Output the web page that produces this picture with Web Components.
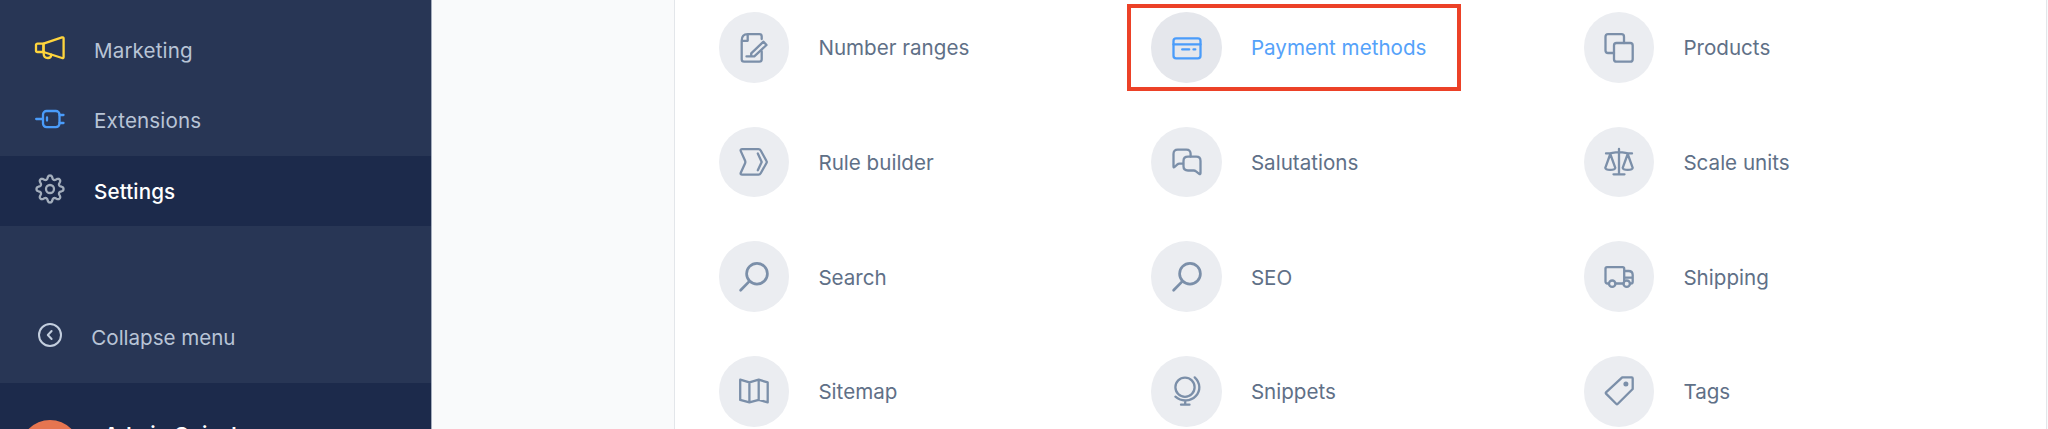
<!DOCTYPE html>
<html lang="en">
<head>
<meta charset="utf-8">
<title>Settings</title>
<style>
html,body{margin:0;height:100%;overflow:hidden;background:#f9fafb}
body{font-family:Inter,"Liberation Sans",sans-serif}
</style>
</head>
<body>
<admin-app></admin-app>
<script>
const gear = (() => {
  const pts = [];
  for (let i = 0; i < 160; i++) {
    const a = i / 160 * Math.PI * 2;
    const r = 11.7 + 1.8 * Math.tanh(1.3 * Math.cos(8 * a)) / Math.tanh(1.3);
    pts.push((15 + r * Math.cos(a)).toFixed(2) + ' ' + (15 + r * Math.sin(a)).toFixed(2));
  }
  return 'M' + pts.join('L') + 'Z';
})();

const ICONS = {
  marketing: '<path d="M8.5 10.7 27 4.4q1.6-.5 1.6 1V24q0 1.500-1.600 1L8.500 19Z"/><path d="M8.500 10.700H2.500Q1 10.700 1 12v5.700Q1 19 2.500 19h6ZM8.500 10.700V19"/><path d="M8.700 19v2q0 4 4.300 4 3.200 0 3.200-3.300"/>',
  plug: '<rect x="8" y="7" width="16.500" height="16.200" rx="3.600"/><path d="M1.200 15H8M24.500 11h4M24.500 19h4M12 13.500v3"/>',
  gear: '<path d="' + gear + '"/><circle cx="15" cy="15" r="4"/>',
  collapse: '<g stroke-width="2"><circle cx="15" cy="15" r="11"/><path d="m16.600 11-3.800 4 3.800 4"/></g>',
  numbers: '<path d="M22.700 6V3.500Q22.700 1.200 20.400 1.200H8.700Q2.700 1.200 2.700 7.800v18.400q0 2.400 2.400 2.400h15.200q2.400 0 2.400-2.400V18.500M2.700 7.800h6V1.200"/><path d="M7.500 23.400h7.800L27.500 12l-3-3.300L12.200 20.300v3"/>',
  rule: '<path d="M3.300 2.200H19.500q1.500 0 2.200 1.300L27.500 14q.6 1 0 2L21.700 26.300q-.7 1.300-2.200 1.300H3.300q-2.400 0-1.400-2.200L6 16.500q.7-1.500 0-3L1.900 4.400q-1-2.200 1.400-2.200Z"/><path d="M18.800 6.500 22.700 15l-3.900 8.300"/>',
  search: '<g stroke-width="2.700"><circle cx="18" cy="11.700" r="10.400"/><path d="m10.300 19.400-8.700 8.900"/></g>',
  map: '<path d="m1.200 3.700 9.200 2.700 9.300-2.700 9 2.700v20l-9-2.500-9.300 2.500-9.200-2.500ZM10.400 6.400v20M19.700 3.700v20.200"/>',
  card: '<rect x="1.500" y="5.300" width="27" height="20" rx="2.600"/><path d="M1.500 11.400h27M10.200 16.400h7M21.500 16.400h1.800"/>',
  chat: '<path d="M18.600 9.500V6.800q0-4.100-4.200-4.100H5.700Q1.500 2.700 1.500 6.900V19.500q0 1.500 1.100.5l2.500-2.300q1.100-1 2.400-1H11"/><path d="M16 9.700h8.300q4.200 0 4.200 4.200V26q0 1.800-1.300.8L24 24.300q-1-.8-2.300-.8H16q-4.500 0-4.500-4.200v-5.400q0-4.200 4.500-4.200Z"/>',
  globe: '<circle cx="13" cy="11.200" r="9.600"/><path d="M22.700 1.400c6 5.700 6 13.600 1 18.700S10 26.400 3.400 20.700M13.200 24.500v4.200M9 28.700h8.500"/>',
  products: '<path d="M10 20H4q-2.500 0-2.500-2.500V3.700Q1.500 1.200 4 1.200h13.500Q20 1.200 20 3.700V10"/><rect x="10" y="10" width="18.700" height="18.700" rx="2.500"/>',
  scale: '<path d="M15 2v25M9.500 27.300h11M2 6.400q3.500.2 6.500-.6 6.500-1.400 13 0 3 .8 6.500.6"/><path d="M6.300 7 1.300 20.800q.3 2 5 2t5-2ZM23.700 7l-5 13.800q.3 2 5 2t5-2Z"/>',
  truck: '<path d="M4.800 21.500H3.500Q1.500 21.500 1.500 19.500V6.700Q1.500 5.200 3 5.200H18.700Q20.200 5.200 20.200 6.700V19M11.500 21.500h8M26 21.500h1q1.700 0 1.700-1.700V13q0-4-4.200-4h-4.300M20.200 15.700h8.500"/><circle cx="8.200" cy="21.700" r="3.200"/><circle cx="22.700" cy="21.700" r="3.200"/>',
  tag: '<path d="M18.200 1.400H27.700q1 0 1 1V13L13.600 28q-.6.600-1.200 0L2 17.600q-.6-.6 0-1.200Z"/><circle cx="21.900" cy="8" r="2.500" fill="currentColor" stroke="none"/>'
};

class UiIcon extends HTMLElement {
  constructor() {
    super();
    this.attachShadow({mode: 'open'}).innerHTML = `
      <style>:host{display:block;width:30px;height:30px;flex:none}svg{display:block;overflow:visible}</style>
      <svg width="30" height="30" viewBox="0 0 30 30" fill="none" stroke="currentColor" stroke-width="2.300" stroke-linecap="round" stroke-linejoin="round">${ICONS[this.getAttribute('name')]}</svg>`;
  }
}
customElements.define('ui-icon', UiIcon);

class NavItem extends HTMLElement {
  constructor() {
    super();
    this.attachShadow({mode: 'open'}).innerHTML = `
      <style>
        :host{display:flex;align-items:center;box-sizing:border-box;height:70.500px;padding:0 0 var(--lift,2.800px) 35px;gap:var(--gap,29px);color:#b8c4d6;font-size:20.600px;letter-spacing:var(--ls,.12px);white-space:nowrap}
        :host([active]){background:#1c2a4b;color:#fff;font-weight:500}
        ui-icon{color:var(--icon,#a3aebc)}
        span{padding-top:3.600px}
      </style>
      <ui-icon name="${this.getAttribute('icon')}"></ui-icon><span><slot></slot></span>`;
  }
}
customElements.define('nav-item', NavItem);

class SideBar extends HTMLElement {
  constructor() {
    super();
    this.attachShadow({mode: 'open'}).innerHTML = `
      <style>
        :host{display:flex;flex-direction:column;width:431px;flex:none;background:#283655;border-right:1px solid #a5adbd;overflow:hidden;box-sizing:content-box}
        nav{padding-top:14.500px;height:300px;box-sizing:border-box;flex:none}
        .fold{--gap:26.300px;--ls:-.03px;--lift:0px;height:83.300px;flex:none}
        .user{flex:1;display:flex;gap:24px;padding:36.700px 0 0 20px;background:#1c2a4b;color:#fff;overflow:hidden}
        .avatar{width:60px;height:60px;border-radius:50%;background:#e67550;flex:none}
        .name{padding-top:2.300px;font-size:20.600px;font-weight:600;line-height:26px;letter-spacing:.1px;white-space:nowrap}
      </style>
      <nav>
        <nav-item icon="marketing" style="--icon:#ffd53d">Marketing</nav-item>
        <nav-item icon="plug" style="--icon:#4a9cfa">Extensions</nav-item>
        <nav-item icon="gear" active>Settings</nav-item>
      </nav>
      <div class="fold"><nav-item icon="collapse" style="--icon:#c3cede">Collapse menu</nav-item></div>
      <div class="user"><div class="avatar"></div><div class="name">Admin Guisel</div></div>`;
  }
}
customElements.define('side-bar', SideBar);

class SettingsItem extends HTMLElement {
  constructor() {
    super();
    this.attachShadow({mode: 'open'}).innerHTML = `
      <style>
        :host{display:flex;align-items:center;gap:29px;height:70.600px;position:relative;color:#5f7087;font-size:20.600px;white-space:nowrap}
        .disc{width:70.600px;height:70.600px;border-radius:50%;background:#ebedf1;display:grid;place-items:center;color:#7b8fa9;flex:none}
        span{padding-top:.6px}
        :host([active]){color:#55a2fa}
        :host([active]) .disc{background:#e5e7ec;color:#4a9cfa}
        :host([active])::after{content:"";position:absolute;left:-24.400px;top:-8.700px;width:326px;height:79px;border:4px solid #ec4127}
      </style>
      <div class="disc"><ui-icon name="${this.getAttribute('icon')}"></ui-icon></div><span><slot></slot></span>`;
  }
}
customElements.define('settings-item', SettingsItem);

class SettingsCard extends HTMLElement {
  constructor() {
    super();
    this.attachShadow({mode: 'open'}).innerHTML = `
      <style>
        :host{display:grid;box-sizing:border-box;width:1373px;height:560px;flex:none;grid-template-columns:repeat(3,432.500px);grid-auto-rows:70.600px;row-gap:44px;padding:12.300px 0 0 43.800px;background:#fff;border:solid #e3e6ea;border-width:0 1px}
      </style>
      <slot></slot>`;
  }
}
customElements.define('settings-card', SettingsCard);

class AdminApp extends HTMLElement {
  constructor() {
    super();
    this.attachShadow({mode: 'open'}).innerHTML = `
      <style>
        :host{display:flex;height:429px;overflow:hidden}
        main{flex:1;padding-left:242px;background:#f9fafb}
      </style>
      <side-bar></side-bar>
      <main><settings-card>
        <settings-item icon="numbers">Number ranges</settings-item>
        <settings-item icon="card" active>Payment methods</settings-item>
        <settings-item icon="products">Products</settings-item>
        <settings-item icon="rule">Rule builder</settings-item>
        <settings-item icon="chat">Salutations</settings-item>
        <settings-item icon="scale">Scale units</settings-item>
        <settings-item icon="search">Search</settings-item>
        <settings-item icon="search">SEO</settings-item>
        <settings-item icon="truck">Shipping</settings-item>
        <settings-item icon="map">Sitemap</settings-item>
        <settings-item icon="globe">Snippets</settings-item>
        <settings-item icon="tag">Tags</settings-item>
      </settings-card></main>`;
  }
}
customElements.define('admin-app', AdminApp);
</script>
</body>
</html>
